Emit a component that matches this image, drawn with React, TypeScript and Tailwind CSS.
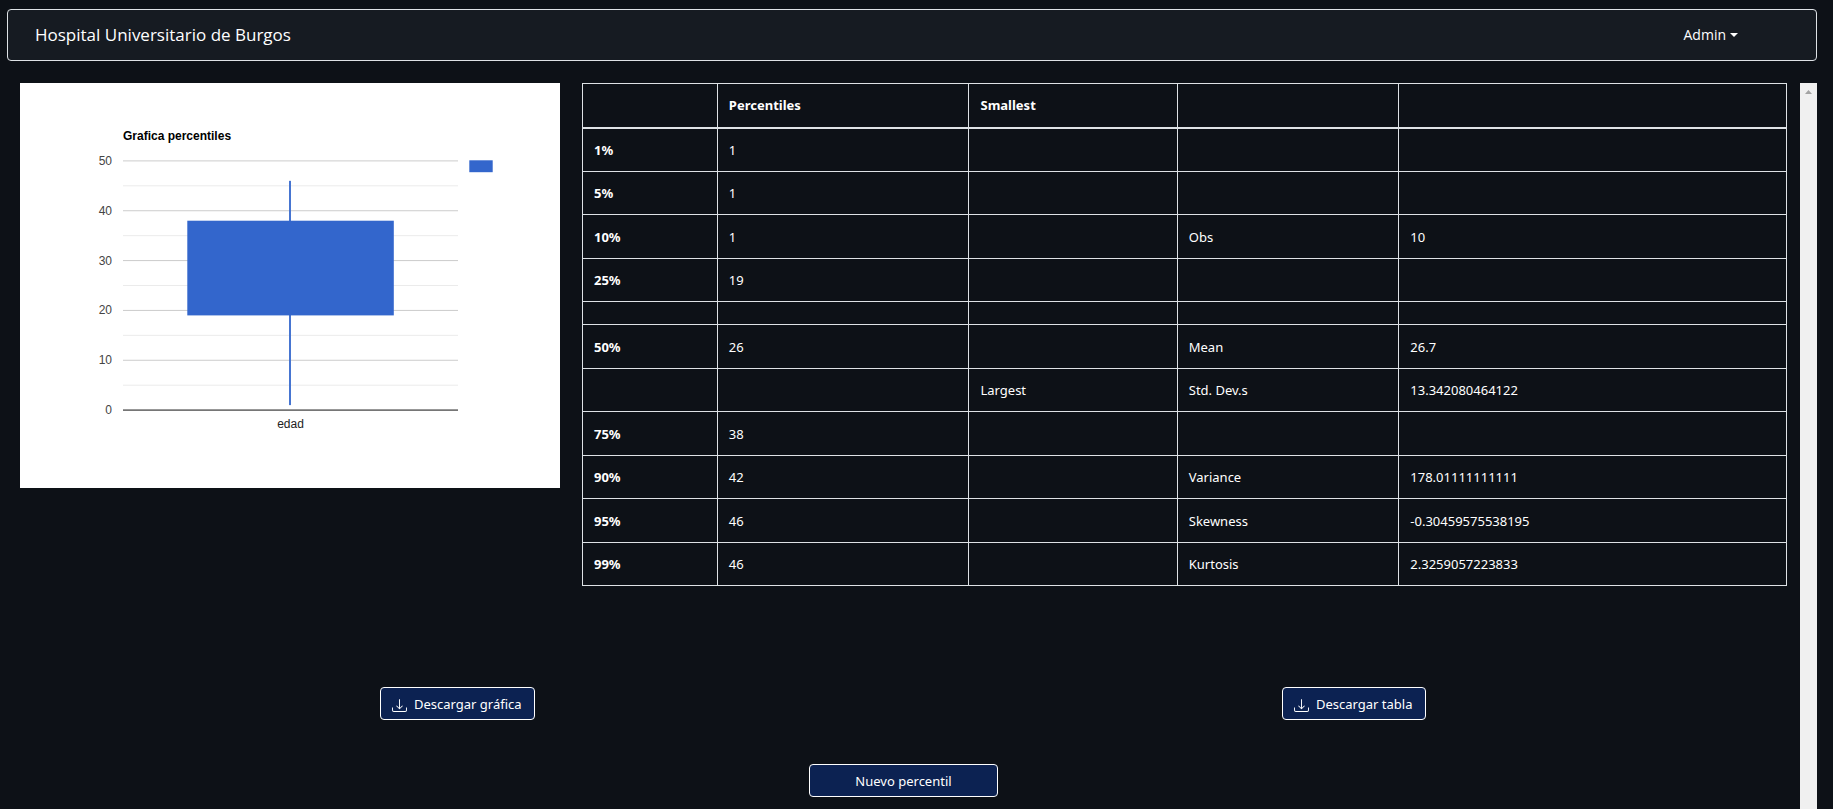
const columns = ["", "Percentiles", "Smallest", "", ""];

const lowerRows = [
  ["1%", "1", "", "", ""],
  ["5%", "1", "", "", ""],
  ["10%", "1", "", "Obs", "10"],
  ["25%", "19", "", "", ""],
];

const upperRows = [
  ["50%", "26", "", "Mean", "26.7"],
  ["", "", "Largest", "Std. Dev.s", "13.342080464122"],
  ["75%", "38", "", "", ""],
  ["90%", "42", "", "Variance", "178.01111111111"],
  ["95%", "46", "", "Skewness", "-0.30459575538195"],
  ["99%", "46", "", "Kurtosis", "2.3259057223833"],
];

const cell = "border border-[#dee2e6] px-[11px] py-0 text-left";
const button =
  "flex h-[33px] items-center justify-center rounded-[4px] border border-white bg-[#0c2252] text-[13px] leading-5 text-white";

function Navbar() {
  return (
    <header className="mr-4 ml-[7px] flex h-[52px] items-center justify-between rounded-[4px] border border-[#dee2e6] bg-[#161b22] pr-[78px] pl-[27px] font-['Open_Sans','Noto_Sans',sans-serif]">
      <a href="#" className="text-[17px] leading-6 text-white">
        Hospital Universitario de Burgos
      </a>
      <button type="button" className="flex items-center gap-1 text-sm text-white">
        Admin
        <svg width="8" height="4" viewBox="0 0 8 4" fill="currentColor" aria-hidden="true">
          <path d="M0 0h8L4 4z" />
        </svg>
      </button>
    </header>
  );
}

// Vertical scale of the box plot: value 0 sits at 327, value 50 at 78.
const scaleY = (value: number) => 327.1 - value * 4.984;

function BoxPlot() {
  return (
    <svg
      viewBox="0 0 540 405"
      className="h-[405px] w-[540px] shrink-0 bg-white font-['Liberation_Sans',Arial,sans-serif] text-[12px]"
      role="img"
      aria-label="Grafica percentiles"
    >
      <text x="103" y="57" fontWeight="700" fill="#000">
        Grafica percentiles
      </text>
      {[5, 15, 25, 35, 45].map((v) => (
        <rect key={v} x="103" y={scaleY(v) - 0.5} width="335" height="1" fill="#ebebeb" />
      ))}
      {[10, 20, 30, 40, 50].map((v) => (
        <rect key={v} x="103" y={scaleY(v) - 0.5} width="335" height="1" fill="#cccccc" />
      ))}
      {[0, 10, 20, 30, 40, 50].map((v) => (
        <text key={v} x="92" y={Math.round(scaleY(v) + 4)} textAnchor="end" fill="#444">
          {v}
        </text>
      ))}
      <rect x="269" y={scaleY(46)} width="2" height={scaleY(1) - scaleY(46)} fill="#4675d1" />
      <rect x="167.3" y={scaleY(38)} width="206.5" height={scaleY(19) - scaleY(38)} fill="#3366cc" />
      <rect x="103" y={scaleY(0) - 0.7} width="335" height="1.4" fill="#555" />
      <text x="270.5" y="345" textAnchor="middle" fill="#222">
        edad
      </text>
      <rect x="449.3" y="77.3" width="23.4" height="11.9" fill="#3366cc" />
    </svg>
  );
}

function Rows({ rows }: { rows: string[][] }) {
  return (
    <tbody>
      {rows.map((row, r) => (
        <tr key={r} className="odd:h-[44px] even:h-[43px]">
          <th scope="row" className={cell + " font-bold"}>
            {row[0]}
          </th>
          {row.slice(1).map((text, c) => (
            <td key={c} className={cell}>
              {text}
            </td>
          ))}
        </tr>
      ))}
    </tbody>
  );
}

function PercentileTable() {
  return (
    <table className="min-w-0 flex-1 table-fixed border-collapse text-[13px] leading-5">
      <colgroup>
        <col className="w-[11.2%]" />
        <col className="w-[20.9%]" />
        <col className="w-[17.3%]" />
        <col className="w-[18.4%]" />
        <col className="w-[32.2%]" />
      </colgroup>
      <thead>
        <tr className="h-[44px]">
          {columns.map((name, i) => (
            <th key={i} scope="col" className={cell + " border-b-2 font-bold"}>
              {name}
            </th>
          ))}
        </tr>
      </thead>
      <Rows rows={lowerRows} />
      <tbody>
        <tr className="h-[23px]">
          {columns.map((_, i) => (
            <td key={i} className={cell} />
          ))}
        </tr>
      </tbody>
      <Rows rows={upperRows} />
    </table>
  );
}

function DownloadIcon() {
  return (
    <svg width="15" height="15" viewBox="0 0 16 16" fill="currentColor" className="mt-1" aria-hidden="true">
      <path d="M.5 9.9a.5.5 0 0 1 .5.5v2.5a1 1 0 0 0 1 1h12a1 1 0 0 0 1-1v-2.5a.5.5 0 0 1 1 0v2.5a2 2 0 0 1-2 2H2a2 2 0 0 1-2-2v-2.5a.5.5 0 0 1 .5-.5z" />
      <path d="M7.646 11.854a.5.5 0 0 0 .708 0l3-3a.5.5 0 0 0-.708-.708L8.5 10.293V1.5a.5.5 0 0 0-1 0v8.793L5.354 8.146a.5.5 0 1 0-.708.708l3 3z" />
    </svg>
  );
}

function DownloadButton({ label }: { label: string }) {
  return (
    <div className="flex justify-center pl-1">
      <button type="button" className={button + " gap-[7px] pr-3 pl-[11px]"}>
        <DownloadIcon />
        {label}
      </button>
    </div>
  );
}

function ScrollTrack() {
  return (
    <div className="flex w-[17px] shrink-0 justify-center bg-[#f0f0f0] pt-[7px]" aria-hidden="true">
      <svg width="7" height="4" viewBox="0 0 7 4" fill="#a3a3a3">
        <path d="M0 4h7L3.5 0z" />
      </svg>
    </div>
  );
}

export default function App() {
  return (
    <div className="flex min-h-screen flex-col bg-[#0d1117] pt-[9px] font-['Noto_Sans',sans-serif] text-white">
      <Navbar />
      <div className="mt-[22px] mr-4 ml-[7px] flex flex-1">
        <main className="min-w-0 flex-1 pb-3">
          <div className="flex items-start gap-[22px] pr-[13px] pl-[13px]">
            <BoxPlot />
            <PercentileTable />
          </div>
          <div className="mt-[101px] grid grid-cols-2">
            <DownloadButton label="Descargar gráfica" />
            <DownloadButton label="Descargar tabla" />
          </div>
          <div className="mt-11 flex justify-center">
            <button type="button" className={button + " w-[189px]"}>
              Nuevo percentil
            </button>
          </div>
        </main>
        <ScrollTrack />
      </div>
    </div>
  );
}
